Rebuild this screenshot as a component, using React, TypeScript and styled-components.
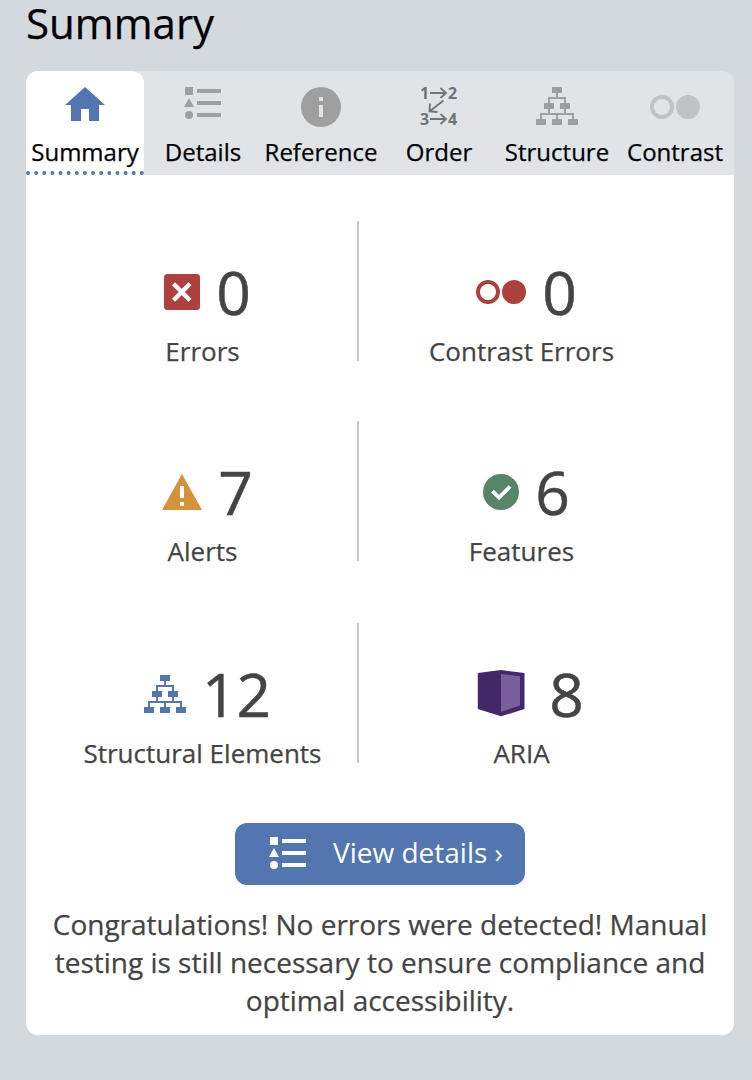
import React from 'react';
import styled, { createGlobalStyle } from 'styled-components';

const GlobalStyle = createGlobalStyle`
  *, *::before, *::after { box-sizing: border-box; }
  body {
    margin: 0;
    background: #d4d9dd;
    color: #000;
    font-family: "Open Sans", "Noto Sans", sans-serif;
    -webkit-text-stroke: 0.25px currentColor;
  }
`;

const Page = styled.main`
  min-height: 1080px;
  padding: 0 18px 0 26px;
  display: flex;
  flex-direction: column;
`;

const Title = styled.h1`
  margin: 0;
  height: 71px;
  font-size: 42px;
  font-weight: 400;
  line-height: 46px;
`;

const TabBar = styled.nav`
  display: grid;
  grid-template-columns: repeat(6, 1fr);
  height: 104px;
  background: #e0e4e7;
  border-radius: 12px 12px 0 0;
`;

const Tab = styled.button<{ $active?: boolean }>`
  display: flex;
  flex-direction: column;
  align-items: center;
  padding: 0;
  border: 0;
  border-bottom: 4px ${(p) => (p.$active ? 'dotted #5276b0' : 'solid transparent')};
  border-radius: ${(p) => (p.$active ? '12px 12px 0 0' : '0')};
  background: ${(p) => (p.$active ? '#fff' : 'transparent')};
  color: #000;
  font: 400 24px/32px "Open Sans", "Noto Sans", sans-serif;
  white-space: nowrap;
`;

const TabIcon = styled.span<{ $color: string; $center?: boolean }>`
  display: flex;
  align-items: ${(p) => (p.$center ? 'center' : 'flex-start')};
  justify-content: center;
  height: 40px;
  margin: 16px 0 9px;
  color: ${(p) => p.$color};
`;

const Panel = styled.section`
  height: 860px;
  padding: 46px 20px 0;
  background: #fff;
  border-radius: 0 0 12px 12px;
  color: #444;
`;

const Counts = styled.ul`
  display: grid;
  grid-template-columns: 313px 325px;
  row-gap: 60px;
  margin: 0;
  padding: 0;
  list-style: none;
`;

const Count = styled.li<{ $divided?: boolean; $last?: boolean }>`
  display: flex;
  flex-direction: column;
  align-items: center;
  height: 140px;
  margin-top: ${(p) => (p.$last ? '2px' : '0')};
  padding-left: ${(p) => (p.$divided ? '2px' : '0')};
  border-right: ${(p) => (p.$divided ? '2px solid #c8c8c8' : '0')};
`;

const CountRow = styled.div`
  display: flex;
  align-items: center;
  gap: 16px;
  height: 82px;
  margin-top: 30px;
  padding-left: 10px;
`;

const CountIcon = styled.span<{ $color: string }>`
  display: flex;
  color: ${(p) => p.$color};
`;

const Value = styled.span`
  font-size: 60.5px;
  line-height: 82px;
  -webkit-text-stroke-width: 0.5px;
`;

const Label = styled.span`
  font-size: 26px;
  line-height: 36px;
  white-space: nowrap;
`;

const DetailsButton = styled.button`
  display: flex;
  align-items: center;
  width: 290px;
  height: 62px;
  margin: 60px auto 0;
  padding: 0 0 2px 34px;
  gap: 26px;
  border: 0;
  border-radius: 12px;
  background: #5276b0;
  color: #fff;
  font: 400 28px/38px "Open Sans", "Noto Sans", sans-serif;
  -webkit-text-stroke-width: 0;
  white-space: nowrap;
`;

const ButtonText = styled.span`
  padding-bottom: 2px;
`;

const Message = styled.p`
  margin: 20px 0 0;
  font-size: 28px;
  line-height: 38px;
  text-align: center;
`;

const HomeIcon = () => (
  <svg width="40" height="34" viewBox="0 0 40 34" fill="currentColor">
    <path d="M20 0L40 18H34V34H24V22H16V34H6V18H0Z" />
  </svg>
);

const ListIcon = () => (
  <svg width="38" height="32" viewBox="0 0 38 32" fill="currentColor">
    <path d="M1 0h8v8H1zM13 2h24v4H13zM13 14h24v4H13zM13 26h24v4H13zM5 11l5 9H0z" />
    <circle cx="5" cy="28" r="4" />
  </svg>
);

const InfoIcon = () => (
  <svg width="40" height="40" viewBox="0 0 40 40">
    <circle cx="20" cy="20" r="20" fill="currentColor" />
    <path d="M18 10h4v4h-4zM18 18h4v12h-4z" fill="#e0e4e7" />
  </svg>
);

const OrderSvg = styled.svg`
  overflow: visible;
  -webkit-text-stroke-width: 0;
`;

const OrderNumber = styled.text`
  font: 700 16px "Open Sans", "Noto Sans", sans-serif;
`;

const OrderIcon = () => (
  <OrderSvg width="40" height="40" viewBox="0 0 40 40" fill="currentColor">
    <OrderNumber x="1" y="12">1</OrderNumber>
    <OrderNumber x="29" y="12">2</OrderNumber>
    <OrderNumber x="1" y="38">3</OrderNumber>
    <OrderNumber x="29" y="38">4</OrderNumber>
    <path
      d="M11 6h16M21.5 1l5.5 5-5.5 5M11 32h16M21.5 27l5.5 5-5.5 5M24.5 13.5L10.5 24.5M11 16.5L10.5 24.5L18.5 25"
      fill="none"
      stroke="currentColor"
      strokeWidth="1.8"
    />
  </OrderSvg>
);

const StructureIcon = () => (
  <svg width="42" height="38" viewBox="0 0 42 38" fill="currentColor">
    <path d="M16 0h10v6H16zM8 16h10v6H8zM24 16h10v6H24zM0 32h10v6H0zM16 32h10v6H16zM32 32h10v6H32z" />
    <path d="M20 6h2v4h8v6h-2v-4H14v4h-2v-6h8zM12 22h2v4h14v-4h2v4h8v6h-2v-4H22v4h-2v-4H6v4H4v-6h8z" />
  </svg>
);

const ContrastIcon = () => (
  <svg width="50" height="24" viewBox="0 0 50 24">
    <circle cx="12" cy="12" r="10" fill="none" stroke="currentColor" strokeWidth="4" />
    <circle cx="38" cy="12" r="12" fill="currentColor" />
  </svg>
);

const ErrorIcon = () => (
  <svg width="36" height="36" viewBox="0 0 36 36">
    <rect width="36" height="36" rx="3.5" fill="currentColor" />
    <path d="M9.5 9.8L26 26.2M26 9.8L9.5 26.2" stroke="#fff" strokeWidth="4.4" />
  </svg>
);

const AlertIcon = () => (
  <svg width="40" height="36" viewBox="0 0 40 36">
    <path d="M20 0L40 36H0Z" fill="currentColor" />
    <path d="M18 12h4v12h-4zM18 28h4v4h-4z" fill="#fff" />
  </svg>
);

const FeatureIcon = () => (
  <svg width="36" height="36" viewBox="0 0 36 36">
    <circle cx="18" cy="18" r="18" fill="currentColor" />
    <path d="M9.5 17.2L16 23.5L27 12.5" fill="none" stroke="#fff" strokeWidth="3.8" />
  </svg>
);

const AriaIcon = () => (
  <svg width="64" height="50" viewBox="0 0 64 50">
    <path d="M8.8 4L32 1L55.5 4V40L32 47.3L8.8 40Z" fill="#422868" />
    <path d="M32 5L51 7.2V36.5L32 43Z" fill="#7a5e9b" />
  </svg>
);

const tabs = [
  { name: 'Summary', color: '#5276b0', icon: <HomeIcon />, active: true },
  { name: 'Details', color: '#9f9fa0', icon: <ListIcon /> },
  { name: 'Reference', color: '#9f9fa0', icon: <InfoIcon /> },
  { name: 'Order', color: '#727374', icon: <OrderIcon /> },
  { name: 'Structure', color: '#9f9fa0', icon: <StructureIcon /> },
  { name: 'Contrast', color: '#c1c2c5', icon: <ContrastIcon />, center: true },
];

const counts = [
  { label: 'Errors', value: 0, color: '#ac413e', icon: <ErrorIcon /> },
  { label: 'Contrast Errors', value: 0, color: '#ac413e', icon: <ContrastIcon /> },
  { label: 'Alerts', value: 7, color: '#d6923a', icon: <AlertIcon /> },
  { label: 'Features', value: 6, color: '#568568', icon: <FeatureIcon /> },
  { label: 'Structural Elements', value: 12, color: '#5276b0', icon: <StructureIcon /> },
  { label: 'ARIA', value: 8, color: '#422868', icon: <AriaIcon /> },
];

export default function App() {
  return (
    <Page>
      <GlobalStyle />
      <Title>Summary</Title>
      <TabBar>
        {tabs.map((tab) => (
          <Tab key={tab.name} $active={tab.active}>
            <TabIcon $color={tab.color} $center={tab.center}>{tab.icon}</TabIcon>
            {tab.name}
          </Tab>
        ))}
      </TabBar>
      <Panel>
        <Counts>
          {counts.map((count, i) => (
            <Count key={count.label} $divided={i % 2 === 0} $last={i >= 4}>
              <CountRow>
                <CountIcon $color={count.color}>{count.icon}</CountIcon>
                <Value>{count.value}</Value>
              </CountRow>
              <Label>{count.label}</Label>
            </Count>
          ))}
        </Counts>
        <DetailsButton>
          <ListIcon />
          <ButtonText>View details ›</ButtonText>
        </DetailsButton>
        <Message>
          Congratulations! No errors were detected! Manual testing is still necessary to ensure
          compliance and optimal accessibility.
        </Message>
      </Panel>
    </Page>
  );
}
